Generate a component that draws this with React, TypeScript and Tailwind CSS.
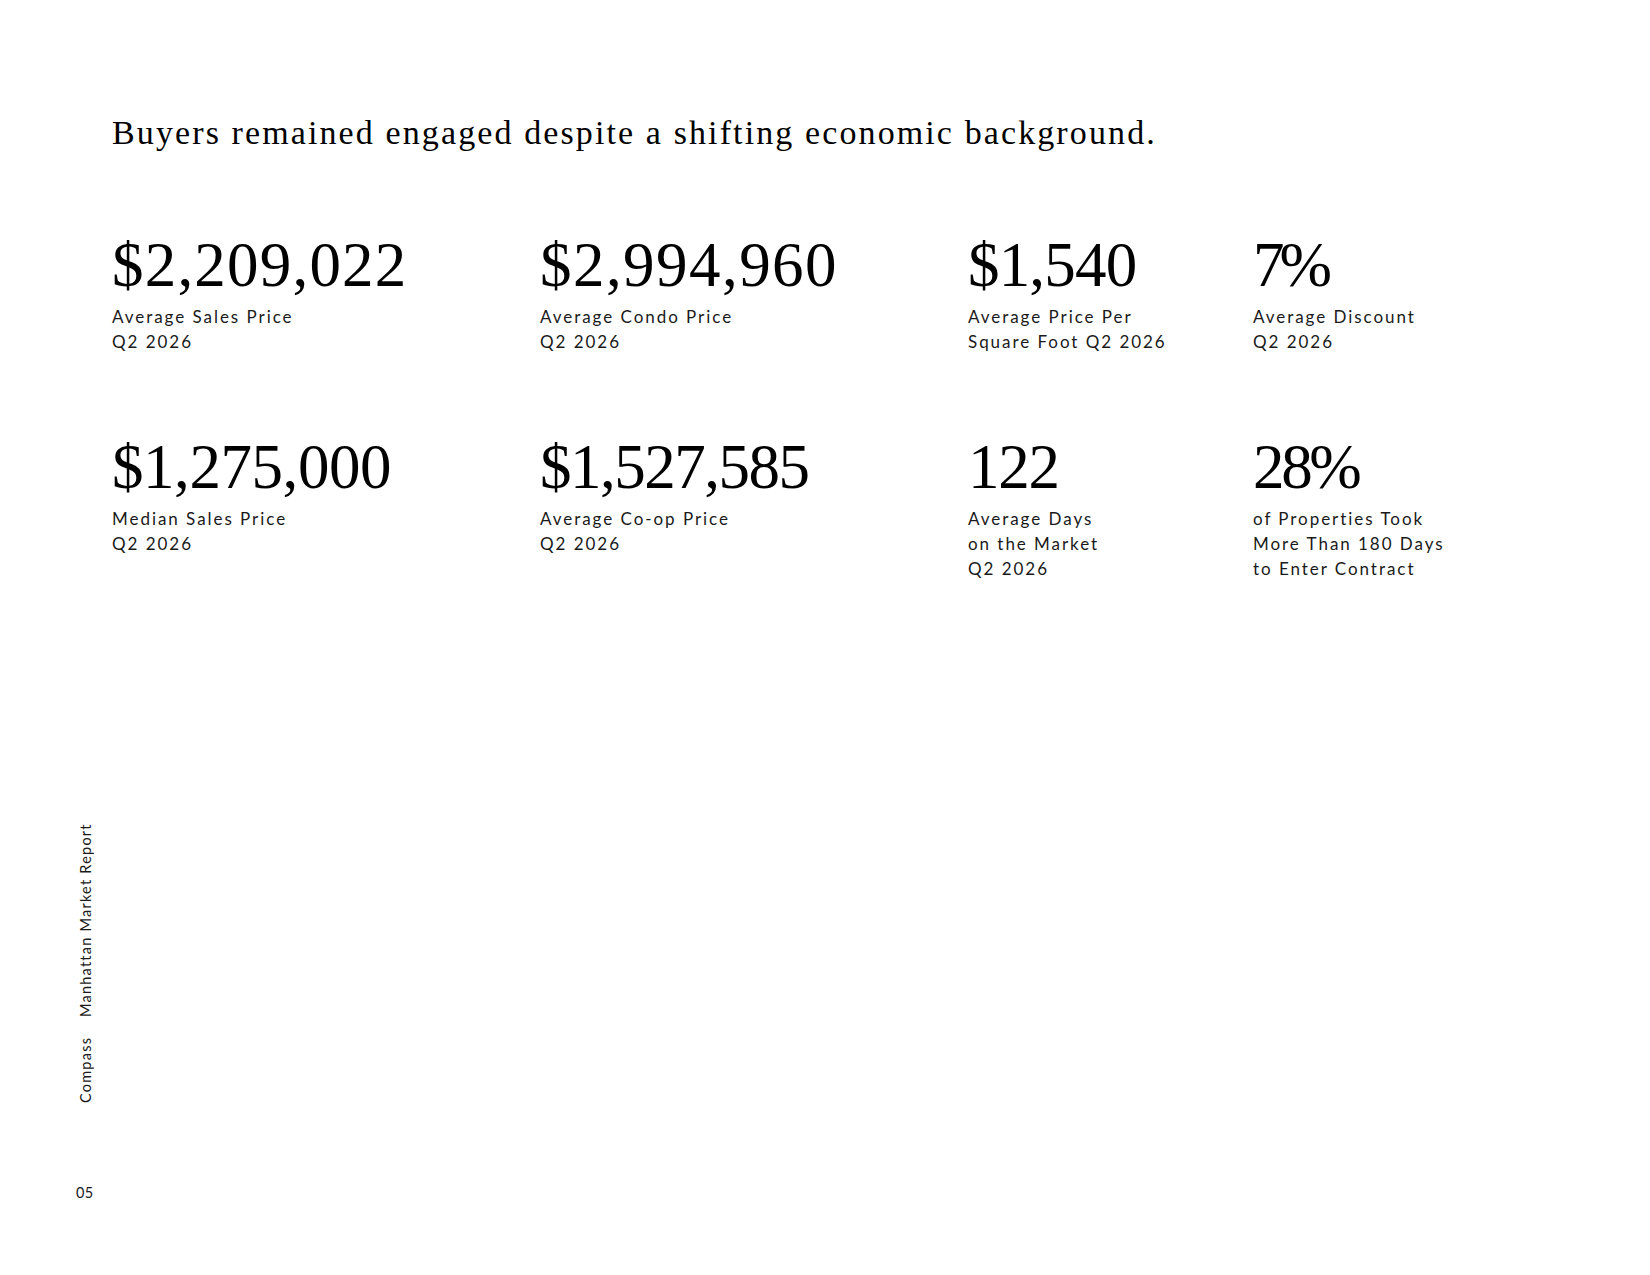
import React from "react";

type Stat = { value: string; lines: string[]; track: string };

const stats: Stat[] = [
  { value: "$2,209,022", lines: ["Average Sales Price", "Q2 2026"], track: "tracking-[0.019em]" },
  { value: "$2,994,960", lines: ["Average Condo Price", "Q2 2026"], track: "tracking-[0.023em]" },
  { value: "$1,540", lines: ["Average Price Per", "Square Foot Q2 2026"], track: "tracking-[-0.013em]" },
  { value: "7%", lines: ["Average Discount", "Q2 2026"], track: "tracking-[-0.08em]" },
  { value: "$1,275,000", lines: ["Median Sales Price", "Q2 2026"], track: "tracking-[-0.007em]" },
  { value: "$1,527,585", lines: ["Average Co-op Price", "Q2 2026"], track: "tracking-[-0.024em]" },
  { value: "122", lines: ["Average Days", "on the Market", "Q2 2026"], track: "tracking-[-0.02em]" },
  { value: "28%", lines: ["of Properties Took", "More Than 180 Days", "to Enter Contract"], track: "tracking-[-0.053em]" },
];

const serif = "font-['Liberation_Serif','Times_New_Roman',serif]";
const sans = "font-['Lato','Open_Sans',sans-serif]";

export default function App() {
  return (
    <div className="flex w-[1650px] h-[1275px] bg-white text-black overflow-hidden">
      <aside className={`w-[112px] shrink-0 flex flex-col items-start pl-[78px] pt-[823px] ${sans}`}>
        <div className="[writing-mode:vertical-rl] rotate-180 text-[14.5px] leading-[15px] tracking-[0.085em] font-normal text-[#1a1a1a] flex gap-[20px]">
          <span>Compass</span>
          <span>Manhattan Market Report</span>
        </div>
        <div className="mt-[80px] -ml-[2px] text-[14.5px] leading-[20px] tracking-[0.02em] font-normal text-[#1a1a1a]">05</div>
      </aside>
      <main className="flex-1 pt-[113px]">
        <h1 className={`${serif} text-[34px] leading-[40px] tracking-[0.062em] font-normal text-black`}>
          Buyers remained engaged despite a shifting economic background.
        </h1>
        <div className="mt-[81px] grid grid-cols-[428px_428px_285px_1fr] gap-y-[82px]">
          {stats.map((s) => (
            <div key={s.value} className="flex flex-col">
              <div className={`${serif} ${s.track} text-[63px] leading-[63px] text-black`}>{s.value}</div>
              <div className={`${sans} mt-[7px] text-[17px] leading-[25px] tracking-[0.115em] font-normal text-[#1a1a1a]`}>
                {s.lines.map((l) => (
                  <div key={l}>{l}</div>
                ))}
              </div>
            </div>
          ))}
        </div>
      </main>
    </div>
  );
}
